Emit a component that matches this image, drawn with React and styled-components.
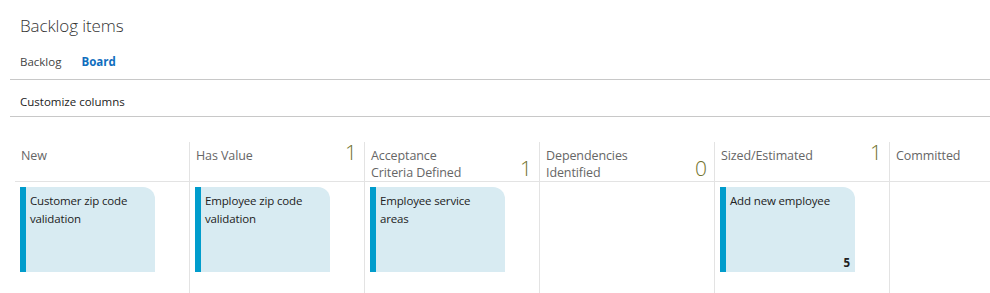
import React from "react";
import styled, {createGlobalStyle} from "styled-components";

const GlobalStyle = createGlobalStyle`
  html, body {
    margin: 0;
    padding: 0;
    background: #fff;
    font-family: "Open Sans", "Noto Sans", sans-serif;
    color: #333;
  }
`;

const Page = styled.div`
  width: 990px;
  height: 293px;
  overflow: hidden;
  display: flex;
  flex-direction: column;
`;

const Title = styled.h1`
  margin: 0;
  padding: 14px 0 0 20px;
  height: 32px;
  font-size: 17px;
  font-weight: 300;
  color: #333;
  letter-spacing: -0.1px;
`;

const Tabs = styled.div`
  display: flex;
  gap: 20px;
  margin-left: 10px;
  padding: 8px 0 0 10px;
  height: 25px;
  border-bottom: 1px solid #c8c8c8;
`;

const Tab = styled.span`
  font-size: 11.5px;
  font-weight: ${p => (p.$active ? 700 : 400)};
  color: ${p => (p.$active ? "#106ebe" : "#444")};
`;

const Toolbar = styled.div`
  margin-left: 10px;
  padding: 14px 0 0 10px;
  height: 22px;
  font-size: 11.5px;
  color: #222;
  border-bottom: 1px solid #c8c8c8;
`;

const Board = styled.div`
  margin: 25px 0 0 15px;
  display: grid;
  grid-template-columns: 174px repeat(4, 175px) 1fr;
  flex: 1;
`;

const Column = styled.div`
  display: flex;
  flex-direction: column;
  border-left: ${p => (p.$first ? "none" : "1px solid #e3e3e3")};
`;

const Header = styled.div`
  height: 40px;
  border-bottom: 1px solid #e3e3e3;
  display: flex;
  justify-content: space-between;
  padding: 0 6px;
  box-sizing: border-box;
`;

const HeaderName = styled.div`
  font-size: 12.5px;
  line-height: 17px;
  color: #666;
  padding-top: 5px;
  letter-spacing: -0.1px;
`;

const Count = styled.div`
  font-size: 21px;
  font-weight: 300;
  color: #72722e;
  align-self: ${p => (p.$low ? "flex-end" : "flex-start")};
  line-height: ${p => (p.$low ? "26px" : "20px")};
  padding-right: 1px;
`;

const Body = styled.div`
  padding: 5px 0 0 5px;
`;

const Card = styled.div`
  width: 135px;
  height: 85px;
  box-sizing: border-box;
  background: #d8ebf2;
  border-left: 6px solid #009ccc;
  border-top-right-radius: 12px;
  padding: 5px 8px 0 4px;
  display: flex;
  flex-direction: column;
  justify-content: space-between;
`;

const CardTitle = styled.div`
  font-size: 11.5px;
  line-height: 18px;
  color: #222;
  letter-spacing: -0.15px;
`;

const Effort = styled.div`
  align-self: flex-end;
  font-size: 11.5px;
  font-weight: 700;
  color: #222;
  margin: 0 -3px 2px 0;
`;

const columns = [
    {name: "New", cards: [{title: "Customer zip code validation"}]},
    {name: "Has Value", count: 1, cards: [{title: "Employee zip code validation"}]},
    {name: ["Acceptance", "Criteria Defined"], count: 1, cards: [{title: "Employee service areas"}]},
    {name: ["Dependencies", "Identified"], count: 0, cards: []},
    {name: "Sized/Estimated", count: 1, cards: [{title: "Add new employee", effort: 5}]},
    {name: "Committed", cards: []},
];

const BoardColumn = ({column, first}) => {
    const twoLine = Array.isArray(column.name);
    return (
        <Column $first={first}>
            <Header>
                <HeaderName>
                    {twoLine ? column.name.map(n => <div key={n}>{n}</div>) : column.name}
                </HeaderName>
                {column.count !== undefined && (
                    <Count $low={twoLine}>{column.count}</Count>
                )}
            </Header>
            <Body>
                {column.cards.map(card => (
                    <Card key={card.title}>
                        <CardTitle>{card.title}</CardTitle>
                        {card.effort && <Effort>{card.effort}</Effort>}
                    </Card>
                ))}
            </Body>
        </Column>
    );
};

const App = () => (
    <Page>
        <GlobalStyle/>
        <Title>Backlog items</Title>
        <Tabs>
            <Tab>Backlog</Tab>
            <Tab $active>Board</Tab>
        </Tabs>
        <Toolbar>Customize columns</Toolbar>
        <Board>
            {columns.map((c, i) => <BoardColumn key={i} column={c} first={i === 0}/>)}
        </Board>
    </Page>
);

export default App;
